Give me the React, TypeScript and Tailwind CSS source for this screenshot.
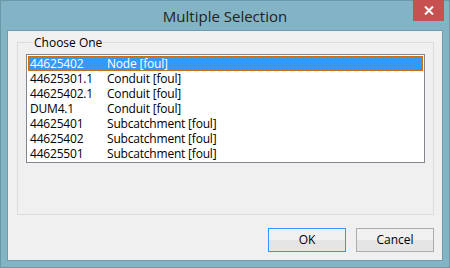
const ROWS: [string, string][] = [
  ["44625402", "Node [foul]"],
  ["44625301.1", "Conduit [foul]"],
  ["44625402.1", "Conduit [foul]"],
  ["DUM4.1", "Conduit [foul]"],
  ["44625401", "Subcatchment [foul]"],
  ["44625402", "Subcatchment [foul]"],
  ["44625501", "Subcatchment [foul]"],
];

function DialogButton({ label, focused }: { label: string; focused?: boolean }) {
  return (
    <button
      type="button"
      className={`w-[78px] h-[24px] border text-[12px] text-black bg-[linear-gradient(#f0f0f0_50%,#e5e5e5_50%)] ${
        focused ? "border-[#3399ff]" : "border-[#acacac]"
      }`}
    >
      {label}
    </button>
  );
}

export default function App() {
  const selected = 0;

  return (
    <div
      className="relative w-[450px] h-[268px] border border-[#6b98a9] bg-[#83b4c6] flex flex-col px-[6px] pb-[6px]"
      style={{ fontFamily: '"Open Sans", "Noto Sans", sans-serif' }}
    >
      {/* title bar */}
      <div className="h-[29px] flex items-center justify-center">
        <span className="text-[15px] text-[#222] pt-[1px]">Multiple Selection</span>
      </div>
      <button
        type="button"
        aria-label="Close"
        className="absolute top-[-1px] right-[5px] w-[31px] h-[21px] bg-[#c75050] flex items-center justify-center"
      >
        <svg width="10" height="9" viewBox="0 0 10 9">
          <path d="M1 0.5 L9 8.5 M9 0.5 L1 8.5" stroke="white" strokeWidth="2" />
        </svg>
      </button>

      {/* client area */}
      <div className="flex-1 border border-[#6e9dae] bg-[#f0f0f0] flex flex-col pl-[9px] pr-[8px] pb-[8px]">
        <fieldset className="mt-[4px] border border-[#dcdcdc] px-[8px] pb-[10px] pt-[4px] h-[180px] flex flex-col">
          <legend className="ml-[7px] px-[1px] text-[12px] leading-[15px] text-black">Choose One</legend>
          <div className="flex-1 border border-[#828790] bg-white p-[1px]">
            {ROWS.map(([id, kind], i) => (
              <div
                key={i}
                className={`h-[15px] flex items-center text-[12px] leading-[15px] tracking-[-0.2px] ${
                  i === selected
                    ? "bg-[#3399ff] text-white outline outline-1 outline-dotted outline-[#cc6600] -outline-offset-1"
                    : "text-black"
                }`}
              >
                <span className="w-[79px] pl-[2px] shrink-0">{id}</span>
                <span>{kind}</span>
              </div>
            ))}
          </div>
        </fieldset>
        <div className="mt-auto flex justify-end gap-[10px]">
          <DialogButton label="OK" focused />
          <DialogButton label="Cancel" />
        </div>
      </div>
    </div>
  );
}
